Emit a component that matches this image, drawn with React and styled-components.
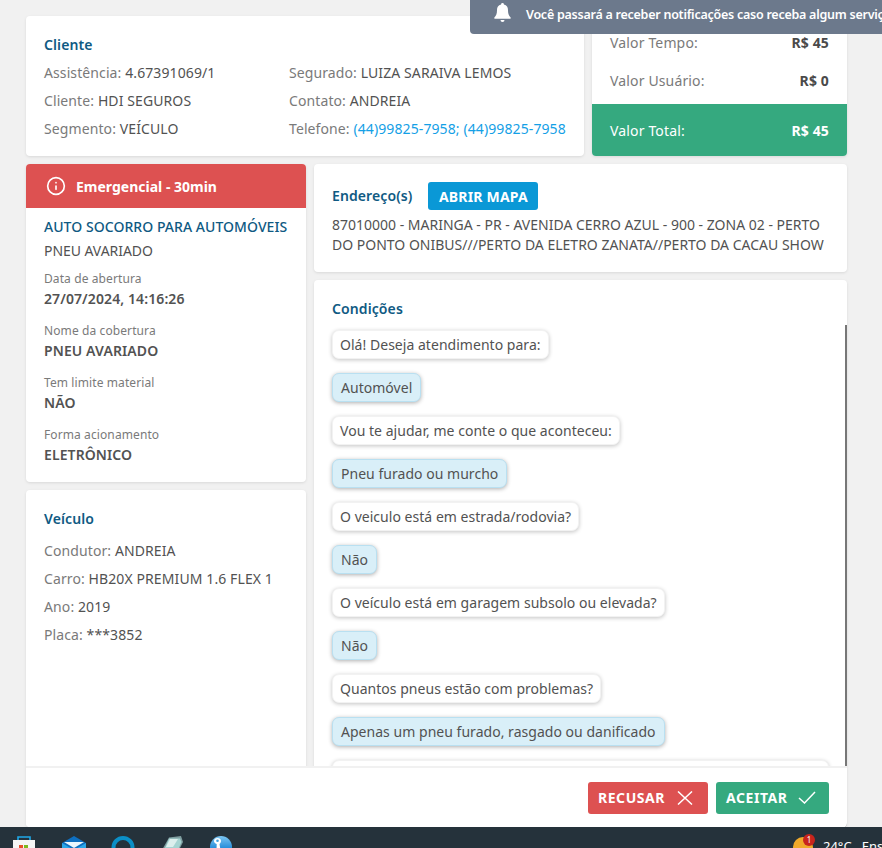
import React from 'react';
import styled, { createGlobalStyle } from 'styled-components';
import { Info } from 'lucide-react';

const GlobalStyle = createGlobalStyle`
  html, body { margin: 0; padding: 0; height: 100%; overflow: hidden; }
  body { background: #f1f1f1; font-family: 'Noto Sans', sans-serif; color: #525252; }
  * { box-sizing: border-box; }
`;

const Page = styled.div`
  width: 882px;
  height: 848px;
  display: flex;
  flex-direction: column;
  position: relative;
  overflow: hidden;
`;

const Content = styled.div`
  flex: 1;
  min-height: 0;
  padding: 16px 35px 0 26px;
  display: flex;
  flex-direction: column;
  gap: 8px;
  overflow: hidden;
`;

const TopRow = styled.div`
  display: grid;
  grid-template-columns: 558px 255px;
  gap: 8px;
  height: 140px;
  flex: none;
`;

const Card = styled.section`
  background: #fff;
  border-radius: 4px;
  box-shadow: 0 1px 3px rgba(0, 0, 0, 0.1);
`;

const ClientCard = styled(Card)`
  padding: 19px 18px 0;
`;

const Title = styled.h3`
  margin: 0;
  font-size: 14px;
  font-weight: 600;
  line-height: 20px;
  letter-spacing: 0.1px;
  color: #0f5a83;
`;

const ClientGrid = styled.div`
  display: grid;
  grid-template-columns: 245px 1fr;
  grid-auto-rows: 28px;
  margin-top: 4px;
`;

const Line = styled.div`
  font-size: 14px;
  line-height: 28px;
  white-space: nowrap;
  color: #7a7a7a;
  letter-spacing: 0.1px;

  b { font-weight: 400; color: #525252; }
  a { color: #14a0e6; text-decoration: none; }
`;

const ValueCard = styled(Card)`
  display: flex;
  flex-direction: column;
  justify-content: flex-end;
  overflow: hidden;
`;

const ValueRow = styled.div`
  display: flex;
  justify-content: space-between;
  align-items: center;
  padding: 0 18px;
  height: 38px;
  font-size: 14px;
  letter-spacing: 0.15px;
  color: #7a7a7a;

  strong { font-weight: 700; color: #4a4a4a; }
`;

const ValueTotal = styled(ValueRow)`
  height: 52px;
  margin-top: 5px;
  background: #35a97f;
  color: #fff;

  strong { color: #fff; }
`;

const MainRow = styled.div`
  display: grid;
  grid-template-columns: 280px 533px;
  gap: 8px;
  flex: 1;
  min-height: 0;
`;

const Column = styled.div`
  display: flex;
  flex-direction: column;
  gap: 8px;
  min-height: 0;
`;

const ServiceCard = styled(Card)`
  flex: none;
  height: 318px;
  overflow: hidden;
`;

const Alert = styled.div`
  height: 44px;
  background: #dd5151;
  color: #fff;
  display: flex;
  align-items: center;
  gap: 10px;
  padding: 0 20px;
  font-size: 14px;
  font-weight: 700;
`;

const ServiceBody = styled.div`
  padding: 9px 18px 0;
`;

const ServiceName = styled.div`
  font-size: 14px;
  line-height: 20px;
  font-weight: 500;
  color: #0f5a83;
  white-space: nowrap;
  letter-spacing: 0.05px;
`;

const ServiceSub = styled.div`
  font-size: 14px;
  line-height: 20px;
  margin: 4px 0 8px;
  letter-spacing: -0.05px;
`;

const Field = styled.div`
  margin-bottom: 12px;
`;

const FieldLabel = styled.div`
  font-size: 12px;
  line-height: 20px;
  color: #7a7a7a;
  letter-spacing: 0.1px;
`;

const FieldValue = styled.div`
  font-size: 14px;
  line-height: 20px;
  font-weight: 600;
  letter-spacing: 0.1px;
`;

const VehicleCard = styled(Card)`
  flex: 1;
  padding: 19px 18px 0;
`;

const VehicleList = styled.div`
  margin-top: 8px;
`;

const AddressCard = styled(Card)`
  flex: none;
  height: 108px;
  padding: 18px 18px 0;
`;

const AddressHead = styled.div`
  display: flex;
  align-items: center;
  gap: 16px;
`;

const MapButton = styled.button`
  width: 110px;
  height: 28px;
  border: 0;
  border-radius: 3px;
  background: #0a98d6;
  color: #fff;
  padding: 0;
  font: 700 14px 'Noto Sans', sans-serif;
  letter-spacing: 0.2px;
`;

const AddressText = styled.div`
  font-size: 14px;
  line-height: 20px;
  margin-top: 5px;
`;

const ConditionCard = styled(Card)`
  flex: 1;
  min-height: 0;
  padding: 19px 18px 0;
  overflow: hidden;
  position: relative;
`;

const ChatList = styled.div`
  display: flex;
  flex-direction: column;
  align-items: flex-start;
  gap: 14px;
  margin-top: 11px;
`;

const Bubble = styled.div`
  height: 29px;
  padding: 0 ${({ $answer }) => ($answer ? 8 : 7)}px;
  border-radius: 7px;
  font-size: 14px;
  line-height: 27px;
  letter-spacing: 0.03px;
  background: ${({ $answer }) => ($answer ? '#d9eff8' : '#fff')};
  border: 1px solid ${({ $answer }) => ($answer ? '#b9e0f1' : '#f2f2f2')};
  box-shadow: 0 1px 4px rgba(0, 0, 0, ${({ $answer }) => ($answer ? 0.32 : 0.24)});
  flex: none;
  white-space: nowrap;
`;

const BlankBubble = styled(Bubble)`
  width: 497px;
`;

const ScrollLine = styled.div`
  position: absolute;
  right: 0;
  top: 45px;
  bottom: 0;
  width: 2px;
  background: #777;
`;

const Footer = styled.footer`
  position: absolute;
  left: 26px;
  top: 766px;
  width: 821px;
  height: 61px;
  background: #fff;
  border-top: 2px solid #f1f1f1;
  border-radius: 0 0 4px 4px;
  display: flex;
  justify-content: flex-end;
  align-items: center;
  gap: 8px;
  padding: 0 18px 0 0;
`;

const ActionButton = styled.button`
  width: ${({ $w }) => $w}px;
  height: 32px;
  border: 0;
  border-radius: 3px;
  color: #fff;
  background: ${({ $tone }) => ($tone === 'danger' ? '#dd5151' : '#35a97f')};
  display: flex;
  align-items: center;
  gap: ${({ $tone }) => ($tone === 'danger' ? 12 : 10)}px;
  padding: 0 0 0 10px;
  font: 700 14px 'Noto Sans', sans-serif;
  letter-spacing: 0.55px;
`;

const Toast = styled.div`
  position: absolute;
  top: 0;
  left: 470px;
  width: 412px;
  height: 34px;
  background: #6c798c;
  border-radius: 0 0 0 4px;
  color: #fff;
  display: flex;
  align-items: center;
  gap: 15px;
  padding: 0 0 6px 24px;
  font-size: 12.5px;
  font-weight: 600;
  letter-spacing: -0.25px;
  white-space: nowrap;
  overflow: hidden;

  svg { flex: none; margin-top: -3px; }
`;

const Taskbar = styled.div`
  flex: none;
  height: 21px;
  background: #25323b;
  position: relative;
  overflow: hidden;
  color: #fff;
  font: 13px 'Noto Sans', sans-serif;
`;

const TaskIcon = styled.div`
  position: absolute;
  top: 9px;
  left: ${({ $x }) => $x}px;
  line-height: 0;
`;

const Weather = styled.div`
  position: absolute;
  left: 823px;
  top: 10px;
  white-space: pre;
  line-height: 18px;
`;

const Sun = styled.span`
  position: absolute;
  left: 793px;
  top: 10px;
  width: 20px;
  height: 20px;
  border-radius: 50%;
  background: #f0a92a;
`;

const Badge = styled.span`
  position: absolute;
  left: 803px;
  top: 7px;
  width: 12px;
  height: 12px;
  border-radius: 50%;
  background: #c8241c;
  color: #fff;
  font-size: 8px;
  line-height: 12px;
  text-align: center;
`;

const leftLines = [
  ['Assistência', '4.67391069/1'],
  ['Segurado', 'LUIZA SARAIVA LEMOS'],
  ['Cliente', 'HDI SEGUROS'],
  ['Contato', 'ANDREIA'],
  ['Segmento', 'VEÍCULO'],
];

const fields = [
  ['Data de abertura', '27/07/2024, 14:16:26'],
  ['Nome da cobertura', 'PNEU AVARIADO'],
  ['Tem limite material', 'NÃO'],
  ['Forma acionamento', 'ELETRÔNICO'],
];

const vehicle = [
  ['Condutor', 'ANDREIA'],
  ['Carro', 'HB20X PREMIUM 1.6 FLEX 1'],
  ['Ano', '2019'],
  ['Placa', '***3852'],
];

const chat = [
  ['Olá! Deseja atendimento para:', false],
  ['Automóvel', true],
  ['Vou te ajudar, me conte o que aconteceu:', false],
  ['Pneu furado ou murcho', true],
  ['O veiculo está em estrada/rodovia?', false],
  ['Não', true],
  ['O veículo está em garagem subsolo ou elevada?', false],
  ['Não', true],
  ['Quantos pneus estão com problemas?', false],
  ['Apenas um pneu furado, rasgado ou danificado', true],
];

const BellIcon = () => (
  <svg width="17" height="20" viewBox="0 0 17 20" fill="#fff">
    <path d="M8.500 0a1.400 1.400 0 0 1 1.400 1.500C12.800 2.100 14 4.300 14 7c0 4 .8 5.600 2.600 7.500.4.4.2 1.200-.5 1.200H.9c-.7 0-.9-.8-.5-1.200C2.200 12.600 3 11 3 7c0-2.700 1.200-4.900 4.100-5.500A1.400 1.400 0 0 1 8.500 0Z" />
    <path d="M6.500 17h4a2 2 0 0 1-4 0Z" />
  </svg>
);

const CrossIcon = () => (
  <svg width="16" height="14" viewBox="0 0 16 14" fill="none" stroke="#fff" strokeWidth="1.500">
    <path d="M1 0.500 15 13.500M15 0.500 1 13.500" />
  </svg>
);

const CheckIcon = () => (
  <svg width="18" height="13" viewBox="0 0 18 13" fill="none" stroke="#fff" strokeWidth="1.500">
    <path d="M1 7 6.500 12 17 1" />
  </svg>
);

const StoreIcon = () => (
  <svg width="24" height="14" viewBox="0 0 24 14">
    <path d="M6 5V1h12v4" fill="none" stroke="#1fa8e8" strokeWidth="1.600" />
    <rect x="1" y="4" width="22" height="10" fill="#f5f5f5" />
    <rect x="7" y="9" width="4" height="4" fill="#e8502a" />
    <rect x="12" y="9" width="4" height="4" fill="#7db81e" />
  </svg>
);

const MailIcon = () => (
  <svg width="26" height="14" viewBox="0 0 26 14">
    <path d="M1 7 13 0l12 7v7H1Z" fill="#0e6fc0" />
    <path d="M3 6h20l-10 6Z" fill="#eaf6fd" />
    <path d="M1 7l12 7 12-7v7H1Z" fill="#2aa6e8" />
  </svg>
);

const RingIcon = () => (
  <svg width="24" height="14" viewBox="0 0 24 14">
    <circle cx="12" cy="11.500" r="9.500" fill="none" stroke="#0b8fc7" strokeWidth="4" />
  </svg>
);

const NoteIcon = () => (
  <svg width="24" height="14" viewBox="0 0 24 14">
    <path d="M8 1.500 20 0l2 6-4 8H1Z" fill="#7f9ea0" />
    <path d="M8 2.500h11l1.500 3.500-3.500 8H3Z" fill="#a6d4d2" />
    <path d="M9 3h8l-5 8H5Z" fill="#dcefed" />
  </svg>
);

const PhoneIcon = () => (
  <svg width="24" height="14" viewBox="0 0 24 14">
    <defs>
      <linearGradient id="phoneFill" x1="0" y1="0" x2="0" y2="1">
        <stop offset="0" stopColor="#7cc6f2" />
        <stop offset="0.6" stopColor="#1f88d8" />
      </linearGradient>
    </defs>
    <circle cx="12" cy="11" r="11" fill="url(#phoneFill)" />
    <path d="M5 5c0-2 1.500-3 3.500-3S12 3 12 5c0 1.500-.8 2.300-1.500 3l1 6H7.500l.2-6C6 7.300 5 6.500 5 5Z" fill="#fff" />
    <circle cx="8.500" cy="4.800" r="1.300" fill="#3c9fe0" />
  </svg>
);

const taskIcons = [
  [12, StoreIcon],
  [61, MailIcon],
  [111, RingIcon],
  [161, NoteIcon],
  [209, PhoneIcon],
];

export default function App() {
  return (
    <Page>
      <GlobalStyle />
      <Content>
        <TopRow>
          <ClientCard>
            <Title>Cliente</Title>
            <ClientGrid>
              {leftLines.map(([label, value]) => (
                <Line key={label}>{label}: <b>{value}</b></Line>
              ))}
              <Line>Telefone: <a href="#tel">(44)99825-7958; (44)99825-7958</a></Line>
            </ClientGrid>
          </ClientCard>
          <ValueCard>
            <ValueRow>Valor Tempo:<strong>R$ 45</strong></ValueRow>
            <ValueRow>Valor Usuário:<strong>R$ 0</strong></ValueRow>
            <ValueTotal>Valor Total:<strong>R$ 45</strong></ValueTotal>
          </ValueCard>
        </TopRow>
        <MainRow>
          <Column>
            <ServiceCard>
              <Alert><Info size={20} strokeWidth={2} />Emergencial - 30min</Alert>
              <ServiceBody>
                <ServiceName>AUTO SOCORRO PARA AUTOMÓVEIS</ServiceName>
                <ServiceSub>PNEU AVARIADO</ServiceSub>
                {fields.map(([label, value]) => (
                  <Field key={label}>
                    <FieldLabel>{label}</FieldLabel>
                    <FieldValue>{value}</FieldValue>
                  </Field>
                ))}
              </ServiceBody>
            </ServiceCard>
            <VehicleCard>
              <Title>Veículo</Title>
              <VehicleList>
                {vehicle.map(([label, value]) => (
                  <Line key={label}>{label}: <b>{value}</b></Line>
                ))}
              </VehicleList>
            </VehicleCard>
          </Column>
          <Column>
            <AddressCard>
              <AddressHead>
                <Title>Endereço(s)</Title>
                <MapButton>ABRIR MAPA</MapButton>
              </AddressHead>
              <AddressText>87010000 - MARINGA - PR - AVENIDA CERRO AZUL - 900 - ZONA 02 - PERTO DO PONTO ONIBUS///PERTO DA ELETRO ZANATA//PERTO DA CACAU SHOW</AddressText>
            </AddressCard>
            <ConditionCard>
              <Title>Condições</Title>
              <ChatList>
                {chat.map(([text, answer], i) => (
                  <Bubble key={i} $answer={answer}>{text}</Bubble>
                ))}
                <BlankBubble />
              </ChatList>
              <ScrollLine />
            </ConditionCard>
          </Column>
        </MainRow>
      </Content>
      <Footer>
        <ActionButton $tone="danger" $w={120}>RECUSAR<CrossIcon /></ActionButton>
        <ActionButton $w={113}>ACEITAR<CheckIcon /></ActionButton>
      </Footer>
      <Toast><BellIcon />Você passará a receber notificações caso receba algum serviço</Toast>
      <Taskbar>
        {taskIcons.map(([x, Icon]) => (
          <TaskIcon key={x} $x={x}><Icon /></TaskIcon>
        ))}
        <Sun />
        <Badge>1</Badge>
        <Weather>24°C   Ens</Weather>
      </Taskbar>
    </Page>
  );
}
